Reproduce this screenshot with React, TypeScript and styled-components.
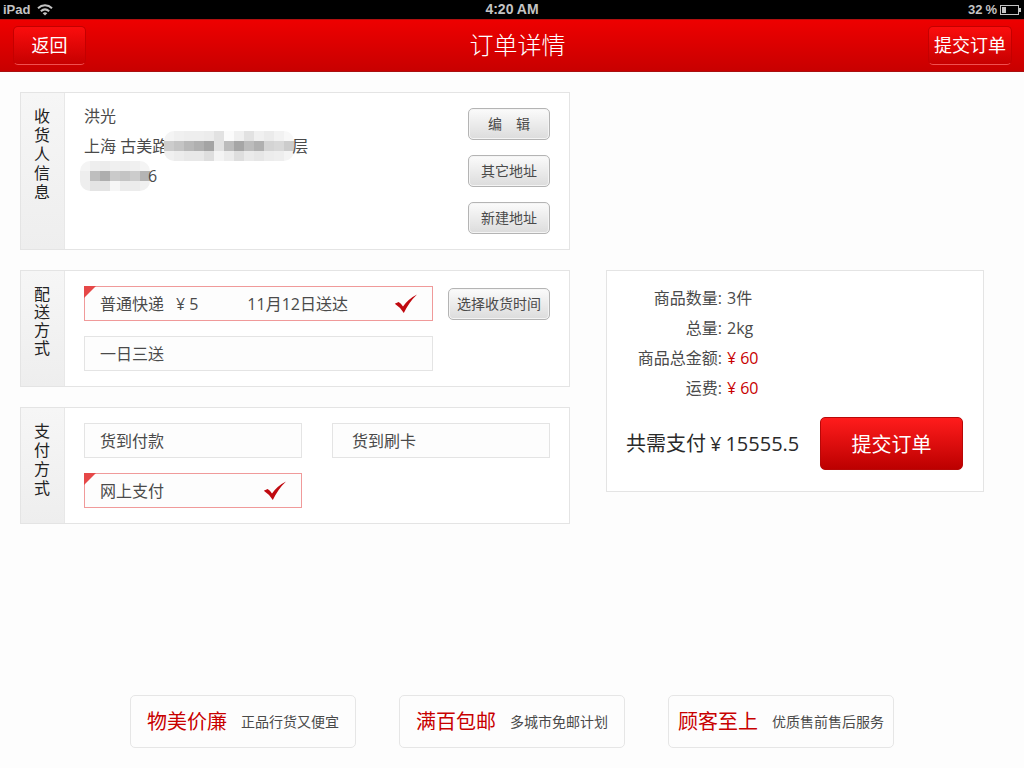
import React, { useState } from "react";
import styled, { createGlobalStyle, css } from "styled-components";

const GlobalStyle = createGlobalStyle`
  *, *::before, *::after { box-sizing: border-box; }
  body {
    margin: 0;
    background: #fdfdfd;
    color: #4a4a4a;
    font-family: "Open Sans", "Noto Sans CJK SC", sans-serif;
    font-size: 16px;
    font-weight: 400;
  }
  button { font-family: inherit; font-weight: inherit; cursor: pointer; }
  h1, h2, p, dl, dd, dt { margin: 0; padding: 0; font-weight: inherit; }
`;

const Page = styled.div`
  min-height: 100vh;
  display: flex;
  flex-direction: column;
`;

const StatusBar = styled.div`
  display: grid;
  grid-template-columns: 1fr auto 1fr;
  align-items: center;
  height: 19px;
  padding: 0 3px;
  background: #000;
  color: #c4c4c4;
  font: bold 13px/19px "Liberation Sans", sans-serif;
`;

const StatusGroup = styled.span<{ $end?: boolean }>`
  display: flex;
  align-items: center;
  gap: ${(p) => (p.$end ? 3 : 7)}px;
  justify-content: ${(p) => (p.$end ? "flex-end" : "flex-start")};
`;

const Clock = styled.span`
  font-size: 14px;
`;

const Header = styled.header`
  display: grid;
  grid-template-columns: 1fr auto 1fr;
  align-items: center;
  height: 53px;
  padding: 0 12px 0 13px;
  background: linear-gradient(#ee0000, #c80000);
  border-top: 1px solid #b01010;
  border-bottom: 1px solid #a81010;
`;

const Title = styled.h1`
  padding: 0 0 2px 10px;
  color: #fff;
  font-size: 24px;
  font-weight: 300;
  line-height: 32px;
`;

const HeaderButton = styled.button<{ $end?: boolean }>`
  justify-self: ${(p) => (p.$end ? "end" : "start")};
  min-width: 73px;
  height: 39px;
  padding: 0 5px 2px;
  border: 1px solid #c40000;
  border-bottom-color: #f05050;
  border-radius: 5px;
  background: linear-gradient(#fb0d0d, #c60000);
  color: #fff;
  font-size: 18px;
  line-height: 34px;
`;

const Main = styled.main`
  display: grid;
  grid-template-columns: 550fr 378fr;
  grid-template-areas: "address ." "delivery summary" "payment summary";
  gap: 20px 36px;
  padding: 20px 40px 20px 20px;
`;

const Panel = styled.section<{ $area: string }>`
  grid-area: ${(p) => p.$area};
  display: grid;
  grid-template-columns: 44px 1fr;
  border: 1px solid #e4e4e4;
  background: #fff;
`;

const PanelLabel = styled.h2<{ $tight?: boolean }>`
  padding: 14px 14px 0 13px;
  border-right: 1px solid #e8e8e8;
  background: linear-gradient(#f6f6f6, #eeeeee);
  color: #222;
  font-size: 16px;
  line-height: ${(p) => (p.$tight ? 18 : 19)}px;
  word-break: break-all;
`;

const AddressBody = styled.div`
  display: flex;
  justify-content: space-between;
  padding: 15px 19px;
`;

const AddressText = styled.address`
  margin-top: -7px;
  font-style: normal;
  line-height: 30px;
`;

const AddressLine = styled.div`
  display: flex;
  align-items: center;
  height: 30px;
`;

const ButtonStack = styled.div`
  display: flex;
  flex-direction: column;
  gap: 15px;
`;

const GreyButton = styled.button<{ $wide?: boolean }>`
  width: ${(p) => (p.$wide ? 102 : 82)}px;
  height: 32px;
  padding: 0;
  border: 1px solid #b4b4b4;
  border-radius: 5px;
  background: linear-gradient(#fbfbfb, #dcdcdc);
  box-shadow: inset 0 0 0 1px #f4f4f4;
  color: #4a4a4a;
  font-size: 14px;
  line-height: 28px;
  white-space: pre;
`;

const DeliveryBody = styled.div`
  display: grid;
  grid-template-columns: 1fr auto;
  align-items: center;
  gap: 15px;
  padding: 15px 19px;
`;

const PaymentBody = styled.div`
  display: grid;
  grid-template-columns: 1fr 1fr;
  gap: 15px 30px;
  padding: 15px 19px;
`;

const OptionBox = styled.label<{ $selected: boolean; $indent?: boolean }>`
  position: relative;
  display: flex;
  align-items: center;
  height: 35px;
  padding: 0 14px 0 ${(p) => (p.$indent ? 19 : 15)}px;
  border: 1px solid #e4e4e4;
  background: #fdfdfd;
  line-height: 24px;
  cursor: pointer;
  ${(p) =>
    p.$selected &&
    css`
      border-color: #f09a9a;
      &::before {
        content: "";
        position: absolute;
        top: -1px;
        left: -1px;
        border-style: solid;
        border-width: 12px 12px 0 0;
        border-color: #e64848 transparent transparent transparent;
      }
    `}
`;

const HiddenRadio = styled.input`
  position: absolute;
  opacity: 0;
  width: 1px;
  height: 1px;
  margin: 0;
`;

const Price = styled.span`
  margin-left: 12px;
`;

const Arrival = styled.span`
  margin-left: 49px;
`;

const Yen = styled.span`
  margin-right: 4px;
`;

const TickSvg = styled.svg`
  margin-left: auto;
`;

const Summary = styled.section`
  grid-area: summary;
  align-self: start;
  padding: 12px 20px 21px 19px;
  border: 1px solid #e4e4e4;
  background: #fff;
`;

const Facts = styled.dl`
  display: grid;
  grid-template-columns: 96px 1fr;
  column-gap: 5px;
  line-height: 30px;
`;

const FactName = styled.dt`
  text-align: right;
`;

const FactValue = styled.dd<{ $red?: boolean }>`
  color: ${(p) => (p.$red ? "#c80000" : "inherit")};
`;

const TotalRow = styled.div`
  display: flex;
  align-items: center;
  justify-content: space-between;
  margin-top: 14px;
`;

const Total = styled.p`
  display: flex;
  gap: 4px;
  color: #2a2a2a;
  font-size: 20px;
  line-height: 30px;
  white-space: nowrap;
`;

const SubmitButton = styled.button`
  width: 143px;
  height: 53px;
  border: 1px solid #b80808;
  border-radius: 5px;
  background: linear-gradient(#ff1c1c, #bc0000);
  color: #fff;
  font-size: 20px;
`;

const Footer = styled.footer`
  display: flex;
  justify-content: center;
  gap: 43px;
  margin-top: auto;
  padding: 0 20px 20px;
`;

const Promise = styled.div`
  display: flex;
  align-items: center;
  justify-content: center;
  gap: 14px;
  width: 226px;
  height: 53px;
  border: 1px solid #e6e6e6;
  border-radius: 5px;
  line-height: 30px;
  white-space: nowrap;
`;

const PromiseTitle = styled.strong`
  color: #c80000;
  font-size: 20px;
  font-weight: inherit;
`;

const PromiseText = styled.span`
  font-size: 14px;
`;

const MosaicSvg = styled.svg`
  flex: none;
  margin: 0 -2px 0 -4px;
  border-radius: 10px;
`;

const WifiIcon = () => (
  <svg width="16" height="12" viewBox="0 0 16 12" fill="none" stroke="#c4c4c4" strokeWidth="2" aria-hidden="true">
    <path d="M1 4.2C5 .4 11 .4 15 4.2" />
    <path d="M3.8 7.2C6.3 5 9.7 5 12.2 7.2" />
    <path d="M8 11.6 5.7 9.2C7 8 9 8 10.3 9.2Z" fill="#c4c4c4" stroke="none" />
  </svg>
);

const BatteryIcon = () => (
  <svg width="21" height="10" viewBox="0 0 21 10" aria-hidden="true">
    <rect x=".5" y=".5" width="18" height="9" fill="none" stroke="#c4c4c4" />
    <rect x="2" y="2" width="4" height="6" fill="#c4c4c4" />
    <path d="M19 3h2v4h-2z" fill="#c4c4c4" />
  </svg>
);

const Tick = () => (
  <TickSvg width="24" height="20" viewBox="0 0 24 20" aria-hidden="true">
    <path d="M.8 9.8 4.6 8Q7 9.4 9 12.4 14.5 4.6 23 .4 15 8 9.8 19 6.4 13.4.8 9.8Z" fill="#c00a10" />
  </TickSvg>
);

/* Redacted text, drawn as rows of 10px mosaic cells. */
const Mosaic = ({ rows }: { rows: string[][] }) => (
  <MosaicSvg width={rows[0].length * 10} height={rows.length * 10} aria-hidden="true" shapeRendering="crispEdges">
    {rows.map((row, y) =>
      row.map((fill, x) => <rect key={`${x}-${y}`} x={x * 10} y={y * 10} width="10" height="10" fill={fill} />)
    )}
  </MosaicSvg>
);

const streetMosaic = [
  ["#f4f4f4", "#f0f0f0", "#eeeeee", "#eeeeee", "#ececec", "#e2e2e2", "#fbfbfb", "#f0f0f0", "#e2e2e2", "#f0f0f0", "#ebebeb", "#f2f2f2", "#f8f8f8"],
  ["#cccccc", "#c4c4c4", "#b8b8b8", "#b0b0b0", "#a4a4a4", "#e2e2e2", "#bcbcbc", "#a6a6a6", "#bcbcbc", "#b0b0b0", "#d4d4d4", "#d8d8d8", "#cccccc"],
  ["#f0f0f0", "#ececec", "#e8e8e8", "#e8e8e8", "#dedede", "#f4f4f4", "#ececec", "#dedede", "#eaeaea", "#e6e6e6", "#ececec", "#eeeeee", "#f4f4f4"],
];

const phoneMosaic = [
  ["#f4f4f4", "#eeeeee", "#ececec", "#f0f0f0", "#eeeeee", "#f0f0f0", "#f4f4f4"],
  ["#eeeeee", "#bebebe", "#aeaeae", "#cacaca", "#c4c4c4", "#cccccc", "#b4b4b4"],
  ["#eeeeee", "#e4e4e4", "#e4e4e4", "#f6f6f6", "#ececec", "#ececec", "#f0f0f0"],
];

const Money = ({ value }: { value: string }) => (
  <span>
    <Yen>¥</Yen>
    {value}
  </span>
);

interface OptionProps {
  group: string;
  value: string;
  current: string;
  indent?: boolean;
  onSelect: (value: string) => void;
  children?: React.ReactNode;
}

const Option = ({ group, value, current, indent, onSelect, children }: OptionProps) => {
  const selected = value === current;
  return (
    <OptionBox $selected={selected} $indent={indent}>
      <HiddenRadio type="radio" name={group} value={value} checked={selected} onChange={() => onSelect(value)} />
      {value}
      {children}
      {selected && <Tick />}
    </OptionBox>
  );
};

const promises = [
  { title: "物美价廉", text: "正品行货又便宜" },
  { title: "满百包邮", text: "多城市免邮计划" },
  { title: "顾客至上", text: "优质售前售后服务" },
];

export default function App() {
  const [delivery, setDelivery] = useState("普通快递");
  const [payment, setPayment] = useState("网上支付");

  return (
    <Page>
      <GlobalStyle />
      <StatusBar>
        <StatusGroup>
          iPad
          <WifiIcon />
        </StatusGroup>
        <Clock>4:20 AM</Clock>
        <StatusGroup $end>
          <span>32</span>
          <span>%</span>
          <BatteryIcon />
        </StatusGroup>
      </StatusBar>
      <Header>
        <HeaderButton type="button">返回</HeaderButton>
        <Title>订单详情</Title>
        <HeaderButton type="button" $end>提交订单</HeaderButton>
      </Header>
      <Main>
        <Panel $area="address">
          <PanelLabel>收货人信息</PanelLabel>
          <AddressBody>
            <AddressText>
              <AddressLine>洪光</AddressLine>
              <AddressLine>
                上海 古美路
                <Mosaic rows={streetMosaic} />
                层
              </AddressLine>
              <AddressLine>
                <Mosaic rows={phoneMosaic} />6
              </AddressLine>
            </AddressText>
            <ButtonStack>
              <GreyButton type="button">{"编\u3000辑"}</GreyButton>
              <GreyButton type="button">其它地址</GreyButton>
              <GreyButton type="button">新建地址</GreyButton>
            </ButtonStack>
          </AddressBody>
        </Panel>
        <Panel $area="delivery">
          <PanelLabel $tight>配送方式</PanelLabel>
          <DeliveryBody>
            <Option group="delivery" value="普通快递" current={delivery} onSelect={setDelivery}>
              <Price>
                <Money value="5" />
              </Price>
              <Arrival>11月12日送达</Arrival>
            </Option>
            <GreyButton type="button" $wide>选择收货时间</GreyButton>
            <Option group="delivery" value="一日三送" current={delivery} onSelect={setDelivery} />
          </DeliveryBody>
        </Panel>
        <Panel $area="payment">
          <PanelLabel>支付方式</PanelLabel>
          <PaymentBody>
            <Option group="payment" value="货到付款" current={payment} onSelect={setPayment} />
            <Option group="payment" value="货到刷卡" current={payment} onSelect={setPayment} indent />
            <Option group="payment" value="网上支付" current={payment} onSelect={setPayment} />
          </PaymentBody>
        </Panel>
        <Summary>
          <Facts>
            <FactName>商品数量:</FactName>
            <FactValue>3件</FactValue>
            <FactName>总量:</FactName>
            <FactValue>2kg</FactValue>
            <FactName>商品总金额:</FactName>
            <FactValue $red>
              <Money value="60" />
            </FactValue>
            <FactName>运费:</FactName>
            <FactValue $red>
              <Money value="60" />
            </FactValue>
          </Facts>
          <TotalRow>
            <Total>
              共需支付
              <Money value="15555.5" />
            </Total>
            <SubmitButton type="button">提交订单</SubmitButton>
          </TotalRow>
        </Summary>
      </Main>
      <Footer>
        {promises.map((p) => (
          <Promise key={p.title}>
            <PromiseTitle>{p.title}</PromiseTitle>
            <PromiseText>{p.text}</PromiseText>
          </Promise>
        ))}
      </Footer>
    </Page>
  );
}
